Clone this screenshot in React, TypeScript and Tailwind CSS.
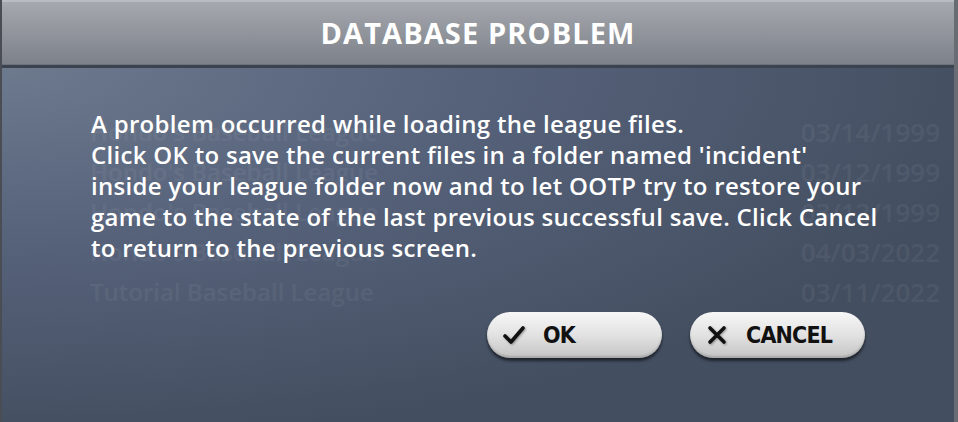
import React from "react";

const ghostRows = [
  { name: "Hondo's Baseball League", date: "03/14/1999" },
  { name: "Hondo's Baseball League", date: "03/12/1999" },
  { name: "Hondo's Baseball League", date: "03/12/1999" },
  { name: "Hondo's Baseball League", date: "04/03/2022" },
  { name: "Tutorial Baseball League", date: "03/11/2022" },
];

function CheckIcon() {
  return (
    <svg width="22" height="20" viewBox="0 0 22 20" className="drop-shadow-[1px_1px_1px_rgba(0,0,0,0.35)]">
      <path d="M2 11 L8 17 L20 3" fill="none" stroke="#111" strokeWidth="3.6" strokeLinecap="round" strokeLinejoin="round" />
    </svg>
  );
}

function CrossIcon() {
  return (
    <svg width="20" height="20" viewBox="0 0 20 20" className="drop-shadow-[1px_1px_1px_rgba(0,0,0,0.35)]">
      <path d="M3 3 L17 17 M17 3 L3 17" fill="none" stroke="#111" strokeWidth="3.6" strokeLinecap="round" />
    </svg>
  );
}

function PillButton({ icon, label }: { icon: React.ReactNode; label: string }) {
  return (
    <button className="flex items-center w-[175px] h-[46px] rounded-full bg-gradient-to-b from-[#f7f7f7] via-[#e2e2e2] to-[#c4c4c4] shadow-[0_3px_3px_rgba(0,0,0,0.55),inset_0_-2px_2px_rgba(0,0,0,0.15)] pl-[10px]">
      <span className="w-[34px] flex justify-center">{icon}</span>
      <span className="ml-[12px] text-[23px] font-bold text-[#111] font-['DejaVu_Sans_Condensed','Liberation_Sans',sans-serif] tracking-[-0.8px]">
        {label}
      </span>
    </button>
  );
}

export default function App() {
  return (
    <div className="w-[958px] h-[422px] bg-[#5d6068] flex overflow-hidden font-['Open_Sans','Noto_Sans',sans-serif]">
      <div className="w-[2px] bg-[#4a4d54]" />
      <div className="w-[952px] flex flex-col">
        {/* Title bar */}
        <div className="h-[2px] bg-[#b9bcc1]" />
        <div className="h-[62px] flex items-center justify-center bg-gradient-to-b from-[#a5a8ae] to-[#7d8189]">
          <h1 className="text-white font-bold text-[29px] tracking-[1.1px]">DATABASE PROBLEM</h1>
        </div>
        <div className="h-[1px] bg-[#6e727a]" />
        <div className="h-[3px] bg-[#3b4350]" />

        {/* Body */}
        <div className="relative flex-1 bg-[radial-gradient(ellipse_at_0%_0%,#6d798d_0%,#56627a_35%,#434e60_75%)]">
          {/* faint list behind the dialog */}
          <div className="absolute inset-0 pt-[44px] pl-[88px] pr-[14px] flex flex-col font-semibold text-white/[0.05]">
            {ghostRows.map((r, i) => (
              <div key={i} className="h-[40px] flex items-center justify-between">
                <span className="text-[24px]">{r.name}</span>
                <span className="text-[26px]">{r.date}</span>
              </div>
            ))}
          </div>

          <div className="relative flex flex-col pt-[40px] pl-[89px]">
            <p className="text-white font-semibold text-[24px] leading-[31px] tracking-[0.3px]">
              A problem occurred while loading the league files.
              <br />
              Click OK to save the current files in a folder named 'incident'
              <br />
              inside your league folder now and to let OOTP try to restore your
              <br />
              game to the state of the last previous successful save. Click Cancel
              <br />
              to return to the previous screen.
            </p>
            <div className="flex gap-[28px] pl-[396px] mt-[49px]">
              <PillButton icon={<CheckIcon />} label="OK" />
              <PillButton icon={<CrossIcon />} label="CANCEL" />
            </div>
          </div>
        </div>
      </div>
      <div className="w-[4px] bg-[#686c73]" />
    </div>
  );
}
